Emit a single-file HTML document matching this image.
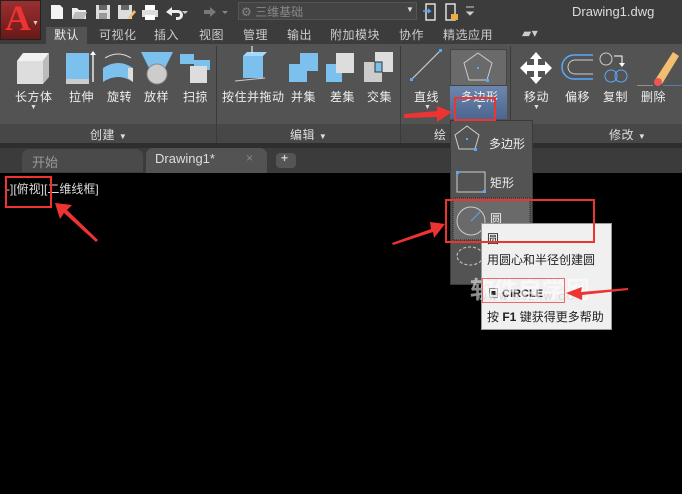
<!DOCTYPE html>
<html><head><meta charset="utf-8"><style>
*{margin:0;padding:0;box-sizing:border-box}
body{width:682px;height:494px;overflow:hidden;background:#000;font-family:"Liberation Sans","Noto Sans CJK SC",sans-serif;position:relative;color:#eee}
.a{position:absolute}
.t{font-size:12px;color:#ddd;white-space:nowrap}
.lbl{position:absolute;font-size:12px;color:#eee;white-space:nowrap;top:88px;letter-spacing:0.5px}
.tab{position:absolute;top:26px;font-size:12px;color:#ccc;white-space:nowrap;letter-spacing:0.5px}
.dn{position:absolute;top:104px;font-size:7px;color:#ddd}
</style></head><body>
<!-- title bar -->
<div class="a" style="left:0;top:0;width:682px;height:44px;background:#3c3c3c"></div>
<div class="a" style="left:0;top:0;width:41px;height:40px;background:linear-gradient(#9a3030,#6a1818);border:1px solid #222"></div>
<div class="a" style="left:5px;top:-3px;font-size:36px;font-weight:bold;color:#e33;font-family:'Liberation Serif',serif">A</div>
<div class="a" style="left:32px;top:20px;color:#ccc;font-size:7px">▼</div>
<svg class="a" style="left:48px;top:2px" width="190" height="20">
<path d="M3 3h9l3 3v11H3z" fill="#f4f4f4"/>
<path d="M24 6h5l2 2h7v9H24z" fill="#eee"/><path d="M27 10h12l-3 7H24z" fill="#bbb"/>
<rect x="48" y="3" width="14" height="14" fill="#ddd"/><rect x="51" y="3" width="8" height="5" fill="#666"/><rect x="51" y="11" width="8" height="6" fill="#999"/>
<rect x="70" y="3" width="14" height="14" fill="#ddd"/><rect x="73" y="3" width="8" height="5" fill="#666"/><path d="M80 16l6-8 2 2-6 7z" fill="#f0c070"/>
<rect x="94" y="8" width="16" height="7" fill="#ddd"/><rect x="97" y="3" width="10" height="5" fill="#fff"/><rect x="97" y="13" width="10" height="5" fill="#fff"/>
<path d="M118 10l6-5v3h6a5 5 0 0 1 0 10h-2v-3h2a2 2 0 0 0 0-4h-6v3z" fill="#eee"/><path d="M134 9l3 3 3-3z" fill="#ccc"/>
<path d="M168 10l-6-5v3h-6v4h6v3z" fill="#777"/><path d="M174 9l3 3 3-3z" fill="#888"/>
</svg>
<div class="a" style="left:238px;top:2px;width:179px;height:18px;background:#444;border:1px solid #555"></div>
<div class="a t" style="left:241px;top:3px;color:#888">⚙ 三维基础</div>
<div class="a t" style="left:406px;top:5px;font-size:8px">▼</div>
<svg class="a" style="left:422px;top:2px" width="60" height="20">
<rect x="4" y="2" width="9" height="16" fill="none" stroke="#ddd" stroke-width="1.5"/><path d="M1 9h7l-2-2M8 9l-2 2" stroke="#5af" stroke-width="1.5" fill="none"/>
<rect x="24" y="2" width="9" height="16" fill="none" stroke="#ddd" stroke-width="1.5"/><rect x="29" y="12" width="7" height="6" fill="#e8b040"/>
<path d="M44 5h8M45 10l3 3 3-3z" stroke="#ccc" fill="#ccc"/>
</svg>
<div class="a t" style="left:572px;top:4px;font-size:13px;color:#ddd">Drawing1.dwg</div>
<!-- tabs -->
<div class="a" style="left:46px;top:27px;width:41px;height:17px;background:#535353"></div>
<div class="tab" style="left:54px;color:#eee">默认</div>
<div class="tab" style="left:99px">可视化</div>
<div class="tab" style="left:154px">插入</div>
<div class="tab" style="left:199px">视图</div>
<div class="tab" style="left:243px">管理</div>
<div class="tab" style="left:287px">输出</div>
<div class="tab" style="left:330px">附加模块</div>
<div class="tab" style="left:399px">协作</div>
<div class="tab" style="left:443px">精选应用</div>
<div class="tab" style="left:522px">▰▾</div>
<!-- ribbon -->
<div class="a" style="left:0;top:44px;width:682px;height:80px;background:#535353"></div>
<div class="a" style="left:0;top:124px;width:682px;height:19px;background:#474747"></div>
<div class="a" style="left:0;top:143px;width:682px;height:5px;background:#2e2e2e"></div>
<div class="a" style="left:216px;top:46px;width:1px;height:97px;background:#3a3a3a"></div>
<div class="a" style="left:400px;top:46px;width:1px;height:97px;background:#3a3a3a"></div>
<div class="a" style="left:510px;top:46px;width:1px;height:97px;background:#3a3a3a"></div>
<!-- icons -->
<svg class="a" style="left:0;top:44px" width="682" height="80">
<polygon points="17,17 43,17 43,40 17,40" fill="#ddd"/><polygon points="17,17 23,9 49,9 43,17" fill="#f2f2f2"/><polygon points="43,17 49,9 49,33 43,40" fill="#bbb"/>
<rect x="66" y="9" width="23" height="28" fill="#7cc0ee"/><rect x="66" y="35" width="23" height="5" fill="#ccc"/><line x1="93" y1="38" x2="93" y2="8" stroke="#fff" stroke-width="1.3"/><path d="M90 11l3-4 3 4z" fill="#fff"/>
<path d="M103 24 Q118 14 133 24 L133 38 Q118 28 103 38Z" fill="#7cc0ee"/><path d="M128 24 L133 24 L133 38 L128 34Z" fill="#ddd"/><path d="M105 14 Q118 6 131 14" stroke="#ddd" fill="none"/>
<polygon points="141,8 173,8 164,26 150,26" fill="#7cc0ee"/><circle cx="157" cy="30" r="10" fill="#ccc" stroke="#888"/>
<path d="M180 10h14v6h16v10h-16v-6h-14z" fill="#7cc0ee"/><rect x="190" y="22" width="17" height="17" fill="#ddd"/>
<rect x="243" y="12" width="20" height="22" fill="#7cc0ee"/><polygon points="243,12 247,8 267,8 263,12" fill="#a8d8f8"/><line x1="235" y1="37" x2="265" y2="34" stroke="#ccc"/><path d="M252 2v7" stroke="#fff"/>
<rect x="289" y="20" width="18" height="18" fill="#7cc0ee"/><rect x="300" y="9" width="18" height="18" fill="#7cc0ee"/>
<rect x="326" y="20" width="16" height="18" fill="#7cc0ee"/><rect x="336" y="9" width="18" height="20" fill="#ddd"/>
<rect x="364" y="18" width="18" height="20" fill="#ccc"/><rect x="375" y="8" width="18" height="20" fill="#ddd"/><rect x="375" y="18" width="7" height="10" fill="#7cc0ee" stroke="#333"/>
<line x1="412" y1="35" x2="440" y2="7" stroke="#ccc" stroke-width="1.2"/><rect x="410" y="34" width="3" height="3" fill="#5af"/><rect x="439" y="5" width="3" height="3" fill="#5af"/>
</svg>
<div class="a" style="left:450px;top:49px;width:57px;height:37px;background:#6a6a6a;border:1px solid #444"></div>
<div class="a" style="left:450px;top:86px;width:57px;height:33px;background:linear-gradient(#6d86ad,#4d6690)"></div>
<svg class="a" style="left:461px;top:51px" width="34" height="34"><polygon points="17,2 31,12 26,29 8,29 3,12" fill="none" stroke="#ccc"/><rect x="16" y="16" width="2" height="2" fill="#5af"/><rect x="25" y="28" width="3" height="3" fill="#5af"/></svg>
<svg class="a" style="left:515px;top:50px" width="167" height="36">
<path d="M21 2 L27 9 L23 9 L23 15 L30 15 L30 11 L37 18 L30 25 L30 21 L23 21 L23 27 L27 27 L21 34 L15 27 L19 27 L19 21 L12 21 L12 25 L5 18 L12 11 L12 15 L19 15 L19 9 L15 9Z" fill="#fff"/>
<path d="M78 5 L59 5 A12 12 0 0 0 59 29 L78 29" stroke="#5af" fill="none" stroke-width="1.5"/><path d="M78 10 L60 10 A7 7 0 0 0 60 24 L78 24" stroke="#ccc" fill="none"/>
<circle cx="91" cy="9" r="6" stroke="#ccc" fill="none"/><circle cx="96" cy="26" r="6" stroke="#5af" fill="none"/><circle cx="106" cy="26" r="6" stroke="#5af" fill="none"/><path d="M99 6 L107 6 L107 15" stroke="#fff" fill="none"/><path d="M104 13l3 4 3-4z" fill="#fff"/>
<path d="M140 30 L158 2 L164 6 L147 34Z" fill="#f0c070"/><circle cx="143" cy="32" r="4" fill="#e55"/><line x1="122" y1="36" x2="138" y2="36" stroke="#ccc"/><line x1="148" y1="36" x2="167" y2="36" stroke="#5af"/>
</svg>
<div class="lbl" style="left:15px">长方体</div>
<div class="lbl" style="left:69px">拉伸</div>
<div class="lbl" style="left:107px">旋转</div>
<div class="lbl" style="left:144px">放样</div>
<div class="lbl" style="left:183px">扫掠</div>
<div class="lbl" style="left:222px">按住并拖动</div>
<div class="lbl" style="left:291px">并集</div>
<div class="lbl" style="left:330px">差集</div>
<div class="lbl" style="left:367px">交集</div>
<div class="lbl" style="left:414px">直线</div>
<div class="lbl" style="left:461px">多边形</div>
<div class="lbl" style="left:524px">移动</div>
<div class="lbl" style="left:565px">偏移</div>
<div class="lbl" style="left:603px">复制</div>
<div class="lbl" style="left:641px">删除</div>
<div class="dn" style="left:30px">▼</div>
<div class="dn" style="left:424px">▼</div>
<div class="dn" style="left:476px">▼</div>
<div class="dn" style="left:533px">▼</div>
<div class="a t" style="left:90px;top:126px;font-size:12px;letter-spacing:0.5px">创建 <span style="font-size:8px">▼</span></div>
<div class="a t" style="left:290px;top:126px;letter-spacing:0.5px">编辑 <span style="font-size:8px">▼</span></div>
<div class="a t" style="left:434px;top:126px">绘</div>
<div class="a t" style="left:609px;top:126px;letter-spacing:0.5px">修改 <span style="font-size:8px">▼</span></div>
<!-- doc tabs -->
<div class="a" style="left:0;top:148px;width:682px;height:25px;background:#3b3b3b"></div>
<div class="a" style="left:22px;top:149px;width:121px;height:23px;background:#4a4a4a;border-radius:7px 7px 0 0"></div>
<div class="a t" style="left:32px;top:152px;color:#999;font-size:13px">开始</div>
<div class="a" style="left:146px;top:148px;width:121px;height:25px;background:#535353;border-radius:7px 7px 0 0"></div>
<div class="a t" style="left:155px;top:151px;font-size:13px">Drawing1*</div>
<div class="a t" style="left:246px;top:151px;color:#888">×</div>
<div class="a" style="left:276px;top:153px;width:20px;height:15px;background:#555;border-radius:4px"></div>
<div class="a t" style="left:281px;top:151px;font-weight:bold;color:#ccc">+</div>
<!-- canvas text -->
<div class="a t" style="left:6px;top:180px;font-size:12px;color:#ddd">-][俯视][二维线框]</div>
<!-- dropdown -->
<div class="a" style="left:450px;top:120px;width:83px;height:165px;background:#535353;border:1px solid #3a3a3a"></div>
<svg class="a" style="left:452px;top:122px" width="80" height="160">
<polygon points="15,4 27,13 23,27 7,27 3,13" fill="none" stroke="#ccc"/><rect x="14" y="16" width="2" height="2" fill="#5af"/><rect x="22" y="26" width="3" height="3" fill="#5af"/>
<rect x="5" y="50" width="28" height="20" fill="none" stroke="#ccc"/><rect x="4" y="49" width="3" height="3" fill="#5af"/><rect x="31" y="68" width="3" height="3" fill="#5af"/>
<rect x="1" y="76" width="77" height="42" fill="#6a6a6a" stroke="#222" stroke-dasharray="1,1"/>
<circle cx="19" cy="99" r="14" fill="none" stroke="#ccc"/><line x1="19" y1="99" x2="28" y2="90" stroke="#5af"/>
<ellipse cx="18" cy="134" rx="13" ry="9" fill="none" stroke="#ccc" stroke-dasharray="3,2"/>
</svg>
<div class="a t" style="left:489px;top:135px;color:#eee">多边形</div>
<div class="a t" style="left:490px;top:174px;color:#eee">矩形</div>
<div class="a t" style="left:490px;top:210px;color:#eee">圆</div>
<!-- tooltip -->
<div class="a" style="left:481px;top:223px;width:131px;height:107px;background:#f0f0f0;border:1px solid #999"></div>
<div class="a t" style="left:487px;top:230px;color:#222">圆</div>
<div class="a t" style="left:487px;top:251px;color:#222">用圆心和半径创建圆</div>
<div class="a t" style="left:488px;top:285px;color:#222;font-weight:bold;font-size:11px">▣ CIRCLE</div>
<div class="a t" style="left:487px;top:308px;color:#222">按 <b>F1</b> 键获得更多帮助</div>
<div class="a" style="left:470px;top:270px;font-size:24px;color:rgba(255,255,255,0.55);font-weight:bold;white-space:nowrap">软件自学网</div>
<div class="a" style="left:478px;top:292px;font-size:9px;color:rgba(200,200,200,0.6);white-space:nowrap;letter-spacing:2px">WWW.RJZXW.COM</div>
<!-- red boxes -->
<div class="a" style="left:5px;top:176px;width:47px;height:32px;border:2px solid #e33"></div>
<div class="a" style="left:454px;top:97px;width:42px;height:24px;border:2px solid #e33"></div>
<div class="a" style="left:445px;top:199px;width:150px;height:44px;border:2px solid #e33"></div>
<div class="a" style="left:482px;top:278px;width:83px;height:25px;border:1px solid rgba(230,50,50,0.7)"></div>
<!-- arrows -->
<svg class="a" style="left:0;top:0" width="682" height="494">
<polygon points="55,203 72,205 67,210 98,240 96,242 64,213 60,219" fill="#e33"/>
<polygon points="445,224 430,222 431,229 392,243 393,245 433,232 434,238" fill="#e33"/>
<polygon points="452,112 437,106 437,111 404,114 404,118 437,117 437,122" fill="#e33"/>
<polygon points="566,293 582,287 581,292 628,288 628,290 582,295 582,300" fill="#e33"/>
</svg>
</body></html>
